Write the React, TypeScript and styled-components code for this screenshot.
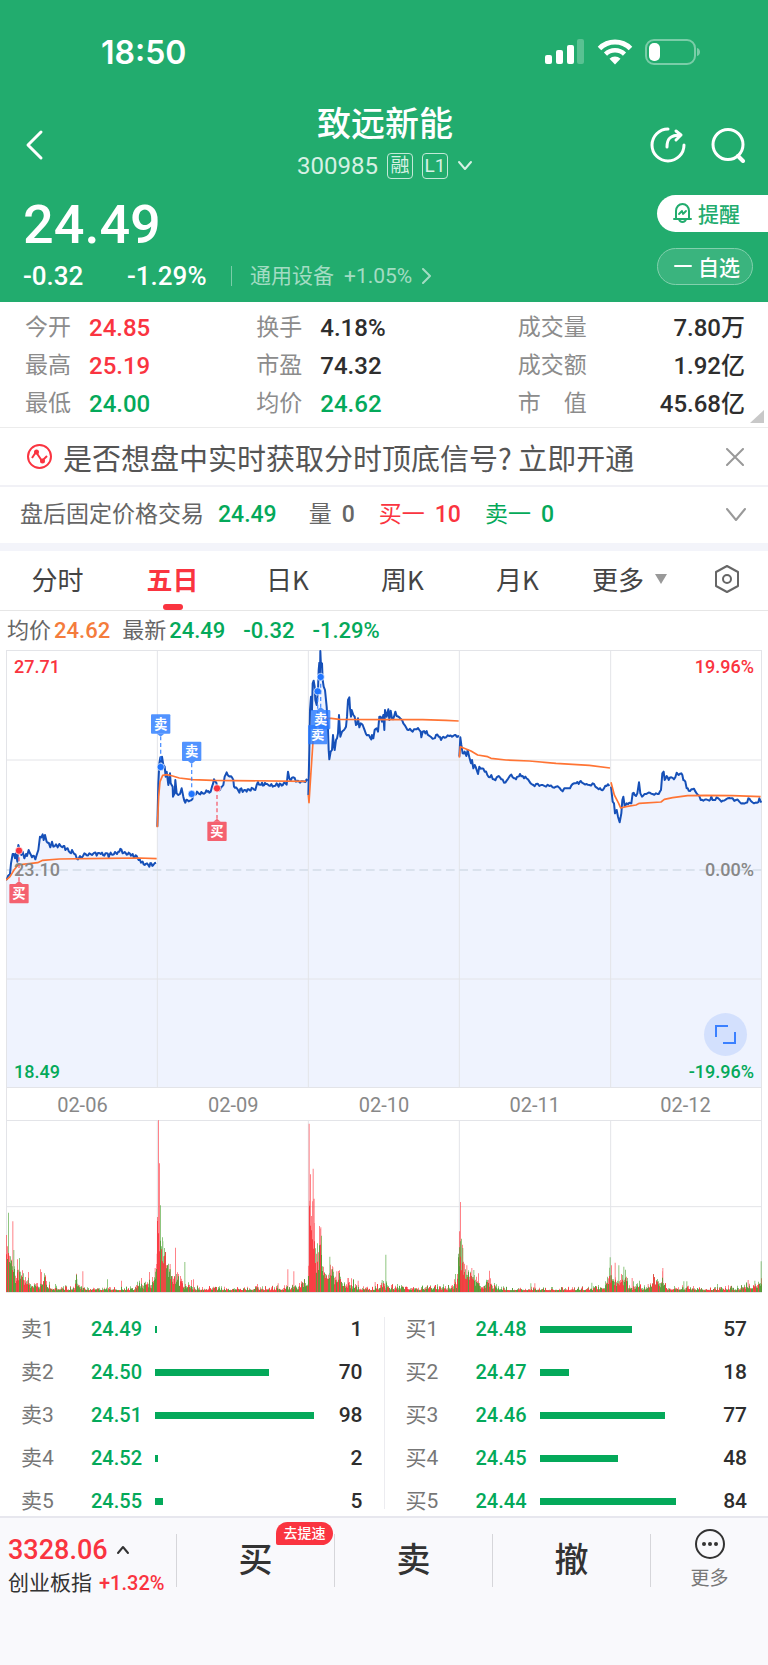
import React from "react";
import styled, { createGlobalStyle, css } from "styled-components";

const GlobalStyle = createGlobalStyle`
  * { box-sizing: border-box; }
  body {
    margin: 0;
    background: #f9f9fc;
    color: #333;
    font-family: Roboto, "Noto Sans CJK SC", sans-serif;
    font-size: 22px;
  }
  button {
    margin: 0;
    padding: 0;
    border: 0;
    background: none;
    color: inherit;
    font: inherit;
    cursor: pointer;
  }
  a { color: inherit; text-decoration: none; }
  svg { display: block; }
  dl, dt, dd, h1, p { margin: 0; font-weight: inherit; }
`;

const RED = "#fa3440";
const GREEN = "#04a95a";
const tones = { up: RED, down: GREEN, plain: "#2e2e2e", muted: "#666", avg: "#f47c3c" };
type Tone = keyof typeof tones;

const Num = styled.span<{ $tone?: Tone }>`
  font-weight: 500;
  color: ${(p) => (p.$tone ? tones[p.$tone] : "inherit")};
`;

/* ---------- header ---------- */

const Header = styled.header`
  background: #22ac6e;
  color: #fff;
`;

const StatusBar = styled.div`
  display: flex;
  align-items: center;
  justify-content: space-between;
  height: 104px;
  padding: 0 67px 0 101px;
`;

const Clock = styled.time`
  padding-top: 2px;
  font: 600 32px/40px Inter, sans-serif;
`;

const StatusIcons = styled.div`
  display: flex;
  align-items: center;
  gap: 12px;
`;

const NavBar = styled.nav`
  display: grid;
  grid-template-columns: 1fr auto 1fr;
  height: 82px;
  padding: 0 22px 0 24px;
`;

const BackButton = styled.button`
  align-self: center;
  justify-self: start;
`;

const NavActions = styled.div`
  display: flex;
  align-items: center;
  justify-content: flex-end;
  gap: 24px;
`;

const TitleBlock = styled.div`
  display: flex;
  flex-direction: column;
  align-items: center;
  gap: 8px;
`;

const StockName = styled.h1`
  font-size: 34px;
  font-weight: 500;
  line-height: 40px;
`;

const CodeRow = styled.button`
  display: flex;
  align-items: center;
  gap: 9px;
  height: 28px;
  line-height: 28px;
  font-size: 24px;
  color: #d6f1e4;
`;

const Tag = styled.span`
  display: grid;
  place-items: center;
  width: 26px;
  height: 26px;
  border: 1px solid #c2e9d7;
  border-radius: 4px;
  font-size: 19px;
  line-height: 24px;
`;

const Quote = styled.section`
  display: flex;
  justify-content: space-between;
  height: 116px;
  padding: 9px 0 0 23px;
`;

const LastPrice = styled.div`
  padding-top: 5px;
  font-size: 54px;
  font-weight: 500;
  line-height: 50px;
`;

const ChangeRow = styled.div`
  display: flex;
  align-items: center;
  margin-top: 9px;
  font-size: 26px;
  line-height: 34px;
`;

const Change = styled(Num)`
  min-width: 104px;
`;

const Sector = styled.a`
  display: flex;
  align-items: center;
  gap: 10px;
  border-left: 1px solid #7acda8;
  padding-left: 18px;
  font-size: 21px;
  line-height: 20px;
  color: #a3dcc3;
`;

const QuoteActions = styled.div`
  display: flex;
  flex-direction: column;
  gap: 16px;
  width: 111px;
`;

const AlertButton = styled.button`
  display: flex;
  align-items: center;
  gap: 5px;
  height: 37px;
  padding: 0 0 2px 15px;
  border-radius: 19px 0 0 19px;
  background: #fff;
  color: #22ac6e;
  font-size: 21px;
  font-weight: 500;
`;

const WatchButton = styled.button`
  display: flex;
  align-items: center;
  gap: 6px;
  width: 96px;
  height: 37px;
  padding: 0 0 2px 16px;
  border: 1px solid #82d0ad;
  border-radius: 19px;
  background: #3ab47e;
  font-size: 21px;
  font-weight: 500;
`;

/* ---------- key figures ---------- */

const Panel = styled.section`
  background: #fff;
`;

const Stats = styled.dl`
  position: relative;
  display: grid;
  grid-template-columns: 231fr 261fr 227fr;
  align-content: start;
  height: 126px;
  padding: 7px 23px 0 25px;
  border-bottom: 1px solid #ececec;
  background: #fff;
`;

const Stat = styled.div<{ $spread?: boolean }>`
  display: flex;
  line-height: 38px;
  height: 38px;
  dt { width: 64px; font-size: 23px; color: #8c8c8c; white-space: pre; }
  dd { font-size: 24px; }
  ${(p) =>
    p.$spread &&
    css`
      justify-content: space-between;
      dt { width: auto; }
    `}
`;

const Corner = styled.svg`
  position: absolute;
  right: 4px;
  bottom: 4px;
`;

const Notice = styled.div`
  display: flex;
  align-items: center;
  height: 59px;
  padding: 0 24px 0 27px;
  border-bottom: 2px solid #f1f1f6;
  color: #555;
  font-size: 29px;
  line-height: 40px;
`;

const NoticeLink = styled.a`
  flex: 1;
  margin-left: 11px;
  white-space: nowrap;
  font-family: "Noto Sans CJK SC", sans-serif;
`;

const AfterHours = styled.div`
  display: flex;
  align-items: center;
  gap: 24px;
  height: 56px;
  padding: 0 22px 0 20px;
  font-size: 23px;
  line-height: 32px;
  color: #666;
`;

const Pair = styled.span<{ $tone: Tone }>`
  display: flex;
  align-items: baseline;
  gap: 10px;
  color: ${(p) => tones[p.$tone]};
`;

const PairFirst = styled(Pair)`
  gap: 14px;
  margin-right: 8px;
`;

const ExpandRow = styled.button`
  margin-left: auto;
`;

const Band = styled.div`
  height: 8px;
  background: #f3f4fa;
`;

/* ---------- tabs ---------- */

const Tabs = styled.div`
  display: grid;
  grid-template-columns: repeat(5, 115fr) 110fr 83fr;
  height: 60px;
  border-bottom: 1px solid #e6e6e6;
  font-family: "Noto Sans CJK SC", sans-serif;
  font-size: 26px;
  line-height: 54px;
  color: #444;
`;

const Tab = styled.button<{ $active?: boolean }>`
  position: relative;
  display: flex;
  align-items: center;
  justify-content: center;
  gap: 10px;
  padding-bottom: 3px;
  ${(p) =>
    p.$active &&
    css`
      color: ${RED};
      font-weight: 700;
      &::after {
        content: "";
        position: absolute;
        bottom: 0;
        left: calc(50% - 10px);
        width: 20px;
        height: 6px;
        border-radius: 3px;
        background: ${RED};
      }
    `}
`;

/* ---------- charts ---------- */

const Legend = styled.div`
  display: flex;
  align-items: center;
  height: 39px;
  padding-left: 7px;
  font-size: 22px;
  line-height: 30px;
  color: #666;
`;

const LegendItem = styled.span`
  display: flex;
  align-items: baseline;
  gap: 3px;
  margin-right: 12px;
`;

const LegendNum = styled(Num)`
  margin-right: 15px;
`;

const Charts = styled.div`
  margin: 0 6px;
`;

const PriceChart = styled.div`
  position: relative;
  svg { width: 100%; height: auto; }
`;

const AxisLabel = styled.span<{ $side: "left" | "right"; $at: "top" | "mid" | "bottom"; $tone: string }>`
  position: absolute;
  ${(p) => p.$side}: 8px;
  ${(p) => (p.$at === "top" ? "top: 6px;" : p.$at === "mid" ? "top: calc(50% - 10px);" : "bottom: 5px;")}
  font-size: 18px;
  font-weight: 500;
  line-height: 22px;
  color: ${(p) => p.$tone};
`;

const FullscreenButton = styled.button`
  position: absolute;
  right: 15px;
  bottom: 32px;
  display: grid;
  place-items: center;
  width: 43px;
  height: 43px;
  border-radius: 50%;
  background: #d3e0fd;
  && svg { width: 21px; height: 21px; }
`;

const Dates = styled.div`
  display: grid;
  grid-template-columns: repeat(5, 1fr);
  height: 32px;
  border: solid #e4e4e8;
  border-width: 0 1px;
  font-size: 20px;
  line-height: 34px;
  text-align: center;
  color: #888;
`;

const VolumeChart = styled.svg`
  width: 100%;
  height: auto;
`;

/* ---------- order book ---------- */

const Book = styled.section`
  display: grid;
  grid-template-columns: 1fr 1px 1fr;
  padding-top: 8px;
  overflow: hidden;
  background: #fff;
`;

const BookDivider = styled.div`
  margin: 16px 0 7px;
  background: #ececf0;
`;

const BookTable = styled.table`
  width: 100%;
  table-layout: fixed;
  border-collapse: separate;
  border-spacing: 0 13px;
  margin-bottom: -13px;
  font-size: 20px;
  line-height: 30px;
  th, td { height: 30px; padding: 0; text-align: left; }
  th { width: 91px; padding-left: 21px; font-weight: 400; color: #777; font-size: 21px; }
  td:nth-child(2) { width: 64px; }
  td:nth-child(4) { width: 66px; padding-right: 21px; text-align: right; font-size: 21px; }
`;

const DepthBar = styled.div`
  height: 7px;
  background: #04a95a;
`;

/* ---------- bottom dock ---------- */

const Dock = styled.footer`
  display: flex;
  height: 151px;
  padding-top: 16px;
  border-top: 2px solid #e7e7ee;
  background: #f9f9fc;
`;

const IndexBlock = styled.button`
  display: flex;
  flex-direction: column;
  width: 176px;
  height: 64px;
  padding-left: 8px;
  text-align: left;
  white-space: nowrap;
`;

const IndexValue = styled.span`
  display: flex;
  align-items: center;
  gap: 8px;
  font-size: 27px;
  line-height: 32px;
  color: ${RED};
`;

const IndexName = styled.span`
  display: flex;
  gap: 7px;
  font-size: 21px;
  line-height: 34px;
  font-weight: 400;
`;

const IndexChange = styled(Num)`
  font-size: 20px;
`;

const DockButton = styled.button`
  position: relative;
  flex: 1;
  height: 53px;
  border-left: 1px solid #d6d6da;
  font-size: 34px;
  font-weight: 500;
  line-height: 53px;
`;

const Badge = styled.span`
  position: absolute;
  top: -12px;
  right: 1px;
  width: 57px;
  height: 23px;
  border-radius: 12px 12px 12px 2px;
  background: ${RED};
  color: #fff;
  font-size: 14px;
  line-height: 22px;
`;

const MoreButton = styled.button`
  display: flex;
  flex-direction: column;
  align-items: center;
  width: 118px;
  height: 53px;
  border-left: 1px solid #d6d6da;
  font-size: 19px;
  line-height: 22px;
  color: #777;
  svg { flex: none; margin: -6px 0 8px; }
`;

/* ---------- chart data (x, y in thirds of a pixel) ---------- */

const priceDays: number[][] = [
  [0,690,6,678,12,672,15,640,20,612,24,612,27,625,30,610,34,635,37,585,42,600,46,615,50,605,55,625,60,612,63,618,68,600,72,610,78,622,84,618,88,628,92,615,97,600,102,560,106,562,110,553,113,570,117,555,122,575,128,578,133,592,138,575,142,590,150,583,155,592,160,582,166,590,172,588,178,600,185,595,192,608,198,600,205,612,212,625,216,628,222,618,228,622,235,610,242,616,250,610,258,615,265,608,272,617,280,609,288,608,295,617,302,610,308,622,314,608,320,614,327,606,333,612,340,605,346,598,350,610,356,606,362,614,368,608,375,617,380,612,386,622,392,618,398,630,405,638,410,635,416,645,423,640,430,650,436,640,442,645,450,638],
  [454,530,457,400,460,340,463,322,466,335,468,320,472,345,476,350,479,380,482,365,487,405,492,370,494,400,500,410,501,440,506,430,508,390,512,430,517,435,522,432,527,415,532,440,538,458,544,450,552,452,559,448,562,432,570,433,576,428,580,432,586,426,590,430,598,428,604,425,610,428,614,425,618,410,624,388,628,395,634,412,642,420,648,410,652,405,656,380,660,372,662,367,668,378,672,380,678,382,682,390,684,410,690,412,696,420,700,428,706,415,710,426,716,420,722,425,728,418,734,422,740,415,748,420,752,405,756,396,762,404,768,398,774,406,780,402,788,406,796,402,804,408,812,400,818,410,824,402,830,406,836,398,842,404,846,365,850,385,854,392,858,383,862,382,870,395,876,392,882,398,890,394,898,396,905,392],
  [907,435,910,300,912,180,915,140,918,180,920,100,923,92,926,110,928,150,932,165,936,120,938,60,940,38,942,90,943,3,945,50,948,40,950,90,953,110,957,120,962,170,966,240,968,300,970,328,974,305,978,300,981,255,984,290,986,300,990,270,993,265,996,250,999,195,1001,230,1003,260,1008,245,1014,240,1020,230,1023,200,1026,150,1030,142,1032,175,1035,200,1037,180,1042,195,1046,200,1050,225,1054,222,1056,205,1060,232,1064,220,1070,225,1075,238,1080,252,1086,255,1092,262,1096,268,1098,255,1102,265,1106,240,1112,235,1116,245,1120,200,1124,200,1128,215,1132,195,1135,240,1137,180,1142,200,1147,178,1150,210,1154,182,1158,205,1164,200,1168,185,1172,198,1180,202,1186,208,1192,220,1200,232,1208,240,1216,242,1224,238,1232,238,1240,240,1244,245,1246,262,1250,245,1258,250,1262,243,1268,256,1276,262,1284,265,1290,255,1298,260,1305,270,1312,260,1320,262,1330,258,1338,260,1346,255,1352,260,1358,256],
  [1360,320,1363,262,1366,285,1370,310,1376,305,1381,318,1385,300,1390,322,1395,340,1398,330,1402,355,1406,345,1412,360,1416,372,1420,350,1428,355,1436,365,1444,375,1452,382,1456,375,1464,388,1472,382,1478,378,1486,388,1494,398,1502,392,1510,380,1516,374,1524,385,1530,388,1536,380,1542,372,1550,378,1558,380,1566,388,1574,400,1582,405,1590,402,1600,408,1610,405,1620,410,1630,408,1640,412,1650,410,1660,413,1670,424,1680,415,1692,415,1700,402,1710,400,1718,402,1724,393,1732,400,1742,402,1750,405,1760,400,1768,410,1778,418,1786,420,1794,415,1802,408,1810,408],
  [1815,410,1820,455,1824,460,1827,490,1832,480,1836,500,1841,517,1846,490,1849,450,1852,440,1856,468,1862,460,1870,458,1876,460,1880,430,1886,435,1894,430,1899,397,1903,430,1908,440,1916,432,1924,430,1932,428,1940,432,1950,430,1958,432,1965,420,1969,370,1973,365,1976,390,1982,378,1988,390,1996,382,2004,388,2012,368,2018,375,2026,370,2032,390,2038,395,2042,415,2048,422,2056,418,2064,416,2072,430,2080,438,2084,450,2092,452,2100,448,2110,452,2116,440,2124,450,2132,442,2142,450,2150,452,2160,448,2170,444,2180,445,2190,450,2200,455,2210,460,2220,458,2227,445,2234,452,2244,460,2254,458,2260,445,2266,458],
];

const averageDays: number[][] = [
  [0,690,12,680,18,670,24,660,36,645,50,643,95,638,110,631,160,627,300,625,400,624,452,626],
  [454,532,458,440,462,395,470,376,482,374,500,378,520,384,560,389,620,391,900,394],
  [907,435,909,458,914,380,922,260,930,215,950,205,976,205,1000,208,1150,209,1250,209,1320,211,1358,213],
  [1360,323,1363,290,1380,297,1395,303,1415,315,1445,320,1455,325,1500,330,1570,333,1650,340,1750,346,1812,354],
  [1815,397,1825,435,1838,460,1844,474,1860,470,1890,465,1900,460,1965,456,1975,448,2000,443,2045,437,2100,436,2180,437,2264,440],
];

const noise = (n: number) => {
  const v = Math.sin(n * 127.1 + 11.7) * 43758.5453;
  return v - Math.floor(v);
};

const toPoints = (d: number[]) => {
  const out: string[] = [];
  for (let i = 0; i < d.length; i += 2) out.push(`${d[i]},${d[i + 1]}`);
  return out.join(" ");
};

/* Tick noise between the sampled minutes. */
const withTicks = (d: number[]) => {
  const out: number[] = [];
  for (let i = 0; i < d.length; i += 2) {
    out.push(d[i], d[i + 1]);
    if (i + 2 < d.length && d[i + 2] - d[i] > 5) {
      out.push((d[i] + d[i + 2]) / 2, (d[i + 1] + d[i + 3]) / 2 + (noise(d[i]) - 0.5) * 12);
    }
  }
  return out;
};

type Side = "buy" | "sell";
/* dot position, box position, and whether the box hangs below its dot */
const trades: { side: Side; x: number; y: number; bx: number; by: number; below: boolean }[] = [
  { side: "buy", x: 39, y: 602, bx: 10, by: 702, below: true },
  { side: "sell", x: 464, y: 351, bx: 435, by: 193, below: false },
  { side: "sell", x: 557, y: 432, bx: 528, by: 275, below: false },
  { side: "buy", x: 633, y: 415, bx: 604, by: 515, below: true },
  { side: "sell", x: 935, y: 124, bx: 906, by: 225, below: true },
  { side: "sell", x: 944, y: 81, bx: 915, by: 180, below: true },
];

const dayLines = [454, 907, 1360, 1814];

const TradeMark = ({ side, x, y, bx, by, below }: (typeof trades)[number]) => {
  const color = side === "buy" ? "#f5414f" : "#2b7bff";
  const cx = bx + 29;
  const tip = below
    ? `M${cx - 11} ${by}L${cx} ${by - 9}L${cx + 11} ${by}Z`
    : `M${cx - 11} ${by + 58}L${cx} ${by + 67}L${cx + 11} ${by + 58}Z`;
  return (
    <g>
      <path d={`M${x} ${y}V${below ? by - 9 : by + 67}`} stroke={color} strokeWidth="4" strokeDasharray="12 8" fill="none" opacity="0.8" />
      <rect x={bx} y={by} width="58" height="58" rx="3" fill={color} opacity="0.82" />
      <path d={tip} fill={color} opacity="0.82" />
      <text x={cx} y={by + 43} textAnchor="middle" fontSize="40" fontWeight="700" fill="#fff" fontFamily="Noto Sans CJK SC, sans-serif">
        {side === "buy" ? "买" : "卖"}
      </text>
      <circle cx={x} cy={y} r="11" fill={side === "buy" ? RED : "#2075ff"} stroke="#fff" strokeWidth="2" />
    </g>
  );
};

/* Volume envelope: x, height */
const envelope = [
  0,190,6,200,10,130,20,80,30,60,36,90,50,60,58,40,70,25,100,18,112,32,130,14,200,8,212,30,220,10,300,8,380,8,400,22,425,30,440,26,446,70,451,90,454,400,458,360,461,250,466,170,472,140,482,90,495,60,506,45,520,26,545,18,560,10,700,8,840,10,880,16,903,30,906,90,909,355,914,300,918,320,922,260,926,190,931,150,938,170,944,190,948,110,956,70,964,55,972,90,982,60,992,45,1005,25,1030,28,1050,12,1100,8,1130,20,1150,12,1250,10,1330,14,1352,30,1357,130,1362,180,1368,130,1374,80,1388,60,1402,60,1416,40,1424,16,1446,40,1456,14,1500,8,1760,8,1800,18,1810,80,1816,50,1830,40,1845,50,1856,40,1866,14,1900,22,1910,8,1965,40,1972,36,1982,12,2080,8,2200,10,2250,20,2264,24,2268,30,
];
/* Single-minute spikes: x, height, 1 for red or 0 for green */
const spikes = [
  6,238,0, 19,212,1, 22,126,0, 33,98,1, 39,102,0, 66,60,1, 102,68,1, 105,60,1, 229,62,1, 303,38,0, 211,38,0, 345,34,1, 446,72,1, 452,115,1, 456,515,1, 459,386,1, 462,260,0, 469,152,0, 477,100,0, 491,84,1, 507,133,1, 535,90,0, 555,36,1, 561,38,1, 753,24,1, 815,26,1, 844,68,1, 862,62,1, 908,505,1, 912,300,1, 920,370,1, 923,280,1, 939,198,1, 943,194,1, 970,106,0, 979,74,1, 991,62,1, 1024,42,1, 1055,34,1, 1106,30,1, 1127,36,0, 1138,112,0, 1359,182,1, 1362,270,1, 1365,160,0, 1369,132,0, 1381,80,1, 1396,72,1, 1402,66,0, 1416,56,1, 1449,64,1, 1573,26,0, 1585,26,1, 1756,28,0, 1805,42,1, 1811,104,0, 1815,80,1, 1826,88,1, 1837,80,0, 1852,76,0, 1877,42,1, 1899,34,0, 1925,24,1, 1969,72,1, 2032,32,0, 2041,32,0, 2133,24,0, 2225,36,1, 2245,34,0, 2264,92,0,
];

const buildVolume = () => {
  const paths = { redSoft: "", red: "", greenSoft: "", green: "" };
  const bar = (x: number, h: number) => `M${x} 516v-${Math.round(h)}h3v${Math.round(h)}z`;
  let k = 0;
  for (let x = 0; x < 2266; x += 3) {
    while (k + 2 < envelope.length - 1 && envelope[k + 2] <= x) k += 2;
    const t = (x - envelope[k]) / (envelope[k + 2] - envelope[k]);
    const env = envelope[k + 1] + t * (envelope[k + 3] - envelope[k + 1]);
    const r = noise(x);
    const tall = env * (0.7 + r * r * (env < 40 ? 1.4 : 0.4));
    const low = tall * (0.5 + noise(x + 5000) * 0.5);
    const bias = x > 450 && x < 461 ? 1 : x > 906 && x < 928 ? 0.9 : 0.5;
    if (noise(x + 900) < bias) paths.redSoft += bar(x, tall);
    else paths.greenSoft += bar(x, tall);
    if (noise(x + 1700) < bias) paths.red += bar(x, Math.max(low, 5));
    else paths.green += bar(x, Math.max(low, 5));
  }
  for (let i = 0; i < spikes.length; i += 3) {
    if (spikes[i + 2]) paths.redSoft += bar(spikes[i], spikes[i + 1]);
    else paths.greenSoft += bar(spikes[i], spikes[i + 1]);
  }
  return paths;
};
const volume = buildVolume();

/* ---------- content ---------- */

const stats: { label: string; value: string; tone: Tone }[] = [
  { label: "今开", value: "24.85", tone: "up" },
  { label: "换手", value: "4.18%", tone: "plain" },
  { label: "成交量", value: "7.80万", tone: "plain" },
  { label: "最高", value: "25.19", tone: "up" },
  { label: "市盈", value: "74.32", tone: "plain" },
  { label: "成交额", value: "1.92亿", tone: "plain" },
  { label: "最低", value: "24.00", tone: "down" },
  { label: "均价", value: "24.62", tone: "down" },
  { label: "市　值", value: "45.68亿", tone: "plain" },
];

const asks: [string, string, number][] = [
  ["卖1", "24.49", 1],
  ["卖2", "24.50", 70],
  ["卖3", "24.51", 98],
  ["卖4", "24.52", 2],
  ["卖5", "24.55", 5],
];
const bids: [string, string, number][] = [
  ["买1", "24.48", 57],
  ["买2", "24.47", 18],
  ["买3", "24.46", 77],
  ["买4", "24.45", 48],
  ["买5", "24.44", 84],
];

const OrderTable = ({ rows, label }: { rows: [string, string, number][]; label: string }) => (
  <BookTable aria-label={label}>
    <tbody>
      {rows.map(([name, price, qty]) => (
        <tr key={name}>
          <th scope="row">{name}</th>
          <td><Num $tone="down">{price}</Num></td>
          <td><DepthBar style={{ width: `${qty}%` }} /></td>
          <td><Num $tone="plain">{qty}</Num></td>
        </tr>
      ))}
    </tbody>
  </BookTable>
);

const line = { fill: "none", stroke: "currentColor", strokeLinecap: "round", strokeLinejoin: "round" } as const;

export default function App() {
  return (
    <>
      <GlobalStyle />
      <Header>
        <StatusBar>
          <Clock>18:50</Clock>
          <StatusIcons>
            <svg width="40" height="26" viewBox="0 0 40 26" fill="#fff" aria-hidden="true">
              <rect x="0" y="16" width="7" height="9" rx="2" />
              <rect x="11" y="11" width="7" height="14" rx="2" />
              <rect x="22" y="6" width="7" height="19" rx="2" />
              <rect x="32" y="0" width="7" height="25" rx="2" opacity="0.25" />
            </svg>
            <svg width="36" height="26" viewBox="0 0 36 26" aria-hidden="true">
              <g fill="none" stroke="#fff" strokeWidth="5">
                <path d="M2.500 9.500a22 22 0 0 1 31 0" />
                <path d="M8.500 15.200a13.500 13.500 0 0 1 19 0" strokeWidth="4.500" />
              </g>
              <path d="M18 25.500l-5.500-5.700a8 8 0 0 1 11 0z" fill="#fff" />
            </svg>
            <svg width="56" height="26" viewBox="0 0 56 26" aria-hidden="true">
              <rect x="1" y="1" width="49" height="24" rx="8" fill="none" stroke="#fff" strokeOpacity="0.4" strokeWidth="2" />
              <rect x="4" y="4" width="11" height="18" rx="5" fill="#fff" />
              <path d="M52 9c4 1 4 7 0 8z" fill="#fff" opacity="0.4" />
            </svg>
          </StatusIcons>
        </StatusBar>

        <NavBar>
          <BackButton aria-label="返回">
            <svg width="22" height="32" viewBox="0 0 22 32" {...line} strokeWidth="3"><path d="M17 3L4 16l13 13" /></svg>
          </BackButton>
          <TitleBlock>
            <StockName>致远新能</StockName>
            <CodeRow>
              300985
              <Tag>融</Tag>
              <Tag>L1</Tag>
              <svg width="16" height="12" viewBox="0 0 16 12" {...line} strokeWidth="2"><path d="M2 2l6 7 6-7" /></svg>
            </CodeRow>
          </TitleBlock>
          <NavActions>
            <button aria-label="分享">
              <svg width="36" height="36" viewBox="0 0 36 36" {...line} strokeWidth="3">
                <path d="M18 2A16 16 0 1 0 34 18" />
                <path d="M17 20c0-8 3-12 14-12M26 4l5 4-5 5" />
              </svg>
            </button>
            <button aria-label="搜索">
              <svg width="36" height="36" viewBox="0 0 36 36" {...line} strokeWidth="3">
                <circle cx="18" cy="17.500" r="15" />
                <path d="M28 29l5 5" strokeWidth="4" />
              </svg>
            </button>
          </NavActions>
        </NavBar>

        <Quote>
          <div>
            <LastPrice>24.49</LastPrice>
            <ChangeRow>
              <Change>-0.32</Change>
              <Change>-1.29%</Change>
              <Sector href="#sector">
                通用设备
                <span>+1.05%</span>
                <svg width="10" height="16" viewBox="0 0 10 16" {...line} strokeWidth="2"><path d="M1 1l7 7-7 7" /></svg>
              </Sector>
            </ChangeRow>
          </div>
          <QuoteActions>
            <AlertButton>
              <svg width="21" height="21" viewBox="0 0 21 21" {...line} strokeWidth="2">
                <path d="M2 17h17M4 17V9a6.500 7 0 0 1 13 0v8M7 17c1 4 6 4 7 0" />
                <path d="M7 12l3-3 1 3 3-3" strokeWidth="1.800" />
              </svg>
              提醒
            </AlertButton>
            <WatchButton>
              <svg width="18" height="4" viewBox="0 0 18 4" {...line} strokeWidth="2"><path d="M1 2h16" /></svg>
              自选
            </WatchButton>
          </QuoteActions>
        </Quote>
      </Header>

      <Panel>
        <Stats>
          {stats.map((s, i) => (
            <Stat key={s.label} $spread={i % 3 === 2}>
              <dt>{s.label}</dt>
              <dd><Num $tone={s.tone}>{s.value}</Num></dd>
            </Stat>
          ))}
          <Corner width="14" height="13" viewBox="0 0 14 13" aria-hidden="true"><path d="M14 0v13H0z" fill="#c8c8c8" /></Corner>
        </Stats>

        <Notice>
          <svg width="25" height="25" viewBox="0 0 25 25" fill="none" stroke={RED} strokeWidth="2" aria-hidden="true">
            <circle cx="12.500" cy="12.500" r="11.500" />
            <path d="M5 14l4-6 6 9 5-5" />
            <circle cx="9.500" cy="8" r="1.500" fill={RED} />
            <circle cx="15.500" cy="17" r="1.500" fill={RED} />
          </svg>
          <NoticeLink href="#signal">是否想盘中实时获取分时顶底信号? 立即开通</NoticeLink>
          <button aria-label="关闭">
            <svg width="18" height="18" viewBox="0 0 18 18" {...line} stroke="#999" strokeWidth="2"><path d="M1 1l16 16M17 1L1 17" /></svg>
          </button>
        </Notice>

        <AfterHours>
          <PairFirst $tone="muted">盘后固定价格交易<Num $tone="down">24.49</Num></PairFirst>
          <Pair $tone="muted">量<Num>0</Num></Pair>
          <Pair $tone="up">买一<Num>10</Num></Pair>
          <Pair $tone="down">卖一<Num>0</Num></Pair>
          <ExpandRow aria-label="展开">
            <svg width="20" height="14" viewBox="0 0 20 14" {...line} stroke="#999" strokeWidth="2"><path d="M1 1l9 11 9-11" /></svg>
          </ExpandRow>
        </AfterHours>
        <Band />

        <Tabs>
          <Tab>分时</Tab>
          <Tab $active>五日</Tab>
          <Tab>日K</Tab>
          <Tab>周K</Tab>
          <Tab>月K</Tab>
          <Tab>
            更多
            <svg width="14" height="10" viewBox="0 0 14 10" aria-hidden="true"><path d="M1 0h12L7 10z" fill="#999" /></svg>
          </Tab>
          <Tab aria-label="设置">
            <svg width="28" height="30" viewBox="0 0 28 30" {...line} stroke="#666" strokeWidth="2">
              <path d="M14 2l11 6v14l-11 6-11-6V8z" />
              <circle cx="14" cy="15" r="4" />
            </svg>
          </Tab>
        </Tabs>

        <Legend>
          <LegendItem>均价<Num $tone="avg">24.62</Num></LegendItem>
          <LegendItem>最新<LegendNum $tone="down">24.49</LegendNum><LegendNum $tone="down">-0.32</LegendNum><LegendNum $tone="down">-1.29%</LegendNum></LegendItem>
        </Legend>

        <Charts>
          <PriceChart>
            <svg viewBox="0 0 2268 1314" role="img" aria-label="五日分时走势">
              {priceDays.map((d, i) => (
                <polygon
                  key={i}
                  fill="#eff3fe"
                  points={`${d[0]},1314 ${toPoints(d)} ${i < 4 ? priceDays[i + 1][0] : 2268},${d[d.length - 1]} ${i < 4 ? priceDays[i + 1][0] : 2268},1314`}
                />
              ))}
              <g fill="none" stroke="#e3e4e8" strokeWidth="3">
                <path d="M0 330H2268M0 987H2268" />
                <rect x="1.500" y="1.500" width="2265" height="1311" />
                {dayLines.map((x) => <path key={x} d={`M${x} 0V1314`} />)}
              </g>
              <path d="M0 660H2268" stroke="#d3dde8" strokeWidth="5" strokeDasharray="26 14" />
              <g fill="none" strokeLinejoin="round">
                {priceDays.map((d, i) => <polyline key={i} points={toPoints(withTicks(d))} stroke="#1650b8" strokeWidth="6" />)}
                {averageDays.map((d, i) => <polyline key={i} points={toPoints(d)} stroke="#ff7434" strokeWidth="5" />)}
              </g>
              {trades.map((t) => <TradeMark key={t.x} {...t} />)}
            </svg>
            <AxisLabel $side="left" $at="top" $tone={RED}>27.71</AxisLabel>
            <AxisLabel $side="right" $at="top" $tone={RED}>19.96%</AxisLabel>
            <AxisLabel $side="left" $at="mid" $tone="#888">23.10</AxisLabel>
            <AxisLabel $side="right" $at="mid" $tone="#888">0.00%</AxisLabel>
            <AxisLabel $side="left" $at="bottom" $tone={GREEN}>18.49</AxisLabel>
            <AxisLabel $side="right" $at="bottom" $tone={GREEN}>-19.96%</AxisLabel>
            <FullscreenButton aria-label="全屏">
              <svg viewBox="0 0 21 21" fill="none" stroke="#3b80ff" strokeWidth="2"><path d="M1 13V2h12M8 19h12V8" /></svg>
            </FullscreenButton>
          </PriceChart>
          <Dates>
            <span>02-06</span>
            <span>02-09</span>
            <span>02-10</span>
            <span>02-11</span>
            <span>02-12</span>
          </Dates>
          <VolumeChart viewBox="0 0 2268 519" role="img" aria-label="成交量">
            <g fill="none" stroke="#e3e4e8" strokeWidth="3">
              <rect x="1.500" y="1.500" width="2265" height="516" />
              <path d="M0 260H2268" />
              {dayLines.map((x) => <path key={x} d={`M${x} 0V519`} />)}
            </g>
            <path d={volume.redSoft} fill="#ff2f38" opacity="0.6" />
            <path d={volume.greenSoft} fill="#45a02c" opacity="0.6" />
            <path d={volume.red} fill="#f9333a" opacity="0.85" />
            <path d={volume.green} fill="#4c9a30" opacity="0.85" />
          </VolumeChart>
        </Charts>

        <Book>
          <OrderTable rows={asks} label="卖盘" />
          <BookDivider />
          <OrderTable rows={bids} label="买盘" />
        </Book>
      </Panel>

      <Dock>
        <IndexBlock>
          <IndexValue>
            <Num>3328.06</Num>
            <svg width="14" height="10" viewBox="0 0 14 10" {...line} stroke="#333" strokeWidth="2"><path d="M2 8l5-6 5 6" /></svg>
          </IndexValue>
          <IndexName>创业板指 <IndexChange $tone="up">+1.32%</IndexChange></IndexName>
        </IndexBlock>
        <DockButton>
          买
          <Badge>去提速</Badge>
        </DockButton>
        <DockButton>卖</DockButton>
        <DockButton>撤</DockButton>
        <MoreButton>
          <svg width="32" height="32" viewBox="0 0 32 32" fill="none" stroke="#333" strokeWidth="2">
            <circle cx="16" cy="16" r="14" />
            <g fill="#333" stroke="none">
              <circle cx="10" cy="16" r="2" />
              <circle cx="16" cy="16" r="2" />
              <circle cx="22" cy="16" r="2" />
            </g>
          </svg>
          更多
        </MoreButton>
      </Dock>
    </>
  );
}
